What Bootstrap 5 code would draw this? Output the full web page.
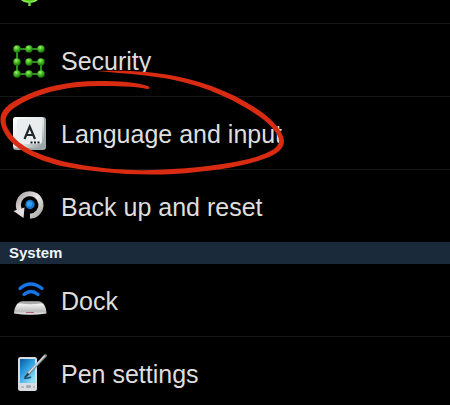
<!DOCTYPE html>
<html lang="en" data-bs-theme="dark">
<head>
<meta charset="utf-8">
<meta name="viewport" content="width=device-width, initial-scale=1">
<title>Settings</title>
<link href="https://cdn.jsdelivr.net/npm/bootstrap@5.3.0/dist/css/bootstrap.min.css" rel="stylesheet">
<style>
body{background:#000;font-family:"Liberation Sans",Arial,sans-serif;overflow:hidden}
.setting{min-height:73px;padding:2px 8px 0;gap:9px;border-bottom:1px solid #171717;color:#dedede;font-size:25px;line-height:30px}
.setting:hover{color:#fff}
.setting svg{width:44px;height:44px;flex:none}
.setting-cut{min-height:0;height:24px;padding-top:0}
.setting-last{min-height:72px;border-bottom:0}
.section-head{background:#1b2a3b;color:#eef5fa;font-size:15px;line-height:22px;padding:0 9px}
.pen-mark{left:0;top:0;z-index:2;pointer-events:none}
</style>
</head>
<body>
<main class="position-relative">
<nav class="d-flex flex-column" aria-label="Personal settings">
<a href="#location" aria-label="Location services" class="setting setting-cut d-flex align-items-end text-decoration-none overflow-hidden">
<svg viewBox="0 0 44 44"><circle cx="21.500" cy="11" r="13" fill="#52cf22"/><path d="M14 21q7 4 15 0" stroke="#91ed55" stroke-width="1.500" fill="none"/><path d="M21.500 22v5" stroke="#62d936" stroke-width="2.500"/></svg></a>
<a href="#security" class="setting d-flex align-items-center text-decoration-none">
<svg viewBox="0 0 44 44"><defs><radialGradient id="bead" cx=".4" cy=".3" r=".7"><stop stop-color="#a5f070"/><stop offset=".4" stop-color="#4cc727"/><stop offset="1" stop-color="#167007"/></radialGradient></defs>
<g transform="translate(0 4)"><path d="M33 6H9V31H33V19H21" fill="none" stroke="#2d8d1e" stroke-width="2"/>
<g fill="url(#bead)"><circle cx="9" cy="6" r="3.700"/><circle cx="21" cy="6" r="3.700"/><circle cx="33" cy="6" r="3.700"/><circle cx="9" cy="19" r="3.700"/><circle cx="21" cy="19" r="3.700"/><circle cx="33" cy="19" r="3.700"/><circle cx="9" cy="31" r="3.700"/><circle cx="21" cy="31" r="3.700"/><circle cx="33" cy="31" r="3.700"/></g></g></svg>
<span>Security</span></a>
<a href="#language" class="setting d-flex align-items-center text-decoration-none">
<svg viewBox="0 0 44 44"><defs><linearGradient id="key" x2="1" y2="1"><stop stop-color="#fff"/><stop offset=".6" stop-color="#dce2e3"/><stop offset="1" stop-color="#8d999c"/></linearGradient></defs>
<g transform="translate(0 -2)"><rect x="5" y="7" width="33" height="33" rx="3" fill="#9da8aa"/><rect x="5" y="7" width="31" height="31" rx="3" fill="url(#key)"/><rect x="9" y="9" width="25" height="25" rx="3" fill="#e9eded"/><path d="M16.500 29 21.700 16.500 27 29M18.500 25h6.500" fill="none" stroke="#20282b" stroke-width="2.200"/><path d="M22.500 32.500h2m1.500 0h2m1.500 0h2" stroke="#15191a" stroke-width="2"/></g></svg>
<span>Language and input</span></a>
<a href="#backup" class="setting setting-last d-flex align-items-center text-decoration-none">
<svg viewBox="0 0 44 44"><defs><linearGradient id="steel" x2="1" y2="1"><stop stop-color="#aaa5a5"/><stop offset=".5" stop-color="#ece8e8"/><stop offset="1" stop-color="#a9a4a4"/></linearGradient></defs>
<path d="M11.300 24.500A11.300 11.300 0 1 1 22 31.300" fill="none" stroke="url(#steel)" stroke-width="5"/><path d="M5.500 26 16.500 22.500 15.500 33Z" fill="#e4dfdf"/><circle cx="22" cy="19.500" r="4.700" fill="#1773c6"/><circle cx="21.500" cy="19" r="2.800" fill="#33a0f0"/></svg>
<span>Back up and reset</span></a>
</nav>
<h2 class="section-head fw-bold m-0">System</h2>
<nav class="d-flex flex-column" aria-label="System settings">
<a href="#dock" class="setting d-flex align-items-center text-decoration-none">
<svg viewBox="0 0 44 44"><defs><linearGradient id="dome" x2="0" y2="1"><stop stop-color="#777"/><stop offset=".25" stop-color="#efefef"/><stop offset=".75" stop-color="#bbb"/><stop offset="1" stop-color="#eee"/></linearGradient></defs>
<g transform="translate(0 -3)"><g fill="none" stroke="#1675e8" stroke-width="3.200" stroke-linecap="round"><path d="M12 12.500Q22.500 3.500 34 12.500"/><path d="M16 18.500Q23 12.500 30 18.500"/></g><path d="M6 37.500C6 31 10 25 15 25H30C35 25 38.500 31 38.500 37.500Q22 40 6 37.500Z" fill="url(#dome)"/><path d="M15 26.500Q22 25 30 26.500L31 27.500Q22 29 14 27.500Z" fill="#aaa"/><path d="M18 36.500h8" stroke="#b85f70" stroke-width="1"/></g></svg>
<span>Dock</span></a>
<a href="#pen" class="setting d-flex align-items-center text-decoration-none">
<svg viewBox="0 0 44 44"><defs><linearGradient id="screen" x2=".7" y2="1"><stop stop-color="#0a5a9a"/><stop offset=".45" stop-color="#2a9be0"/><stop offset="1" stop-color="#8fdcf5"/></linearGradient></defs>
<g transform="translate(0 -2)"><rect x="10" y="7" width="19" height="34" rx="2.500" fill="#d7dde0"/><rect x="12" y="9" width="15" height="24" fill="url(#screen)"/><path d="M13 37h3m9 0h2" stroke="#949da2" stroke-width="1"/><rect x="18" y="35" width="5" height="3" rx="1" fill="#a5adb1"/><path d="M16 28q3 1 7-1" stroke="#14507c" stroke-width="1.500" fill="none"/><path d="M37.500 5.500 20 24" stroke="#777f83" stroke-width="3" stroke-linecap="round"/><path d="M37 5.500 20 23.500" stroke="#d7dbdd" stroke-width="1.500"/><path d="M20.500 23.500 17 27.500" stroke="#23465c" stroke-width="2"/></g></svg>
<span>Pen settings</span></a>
</nav>
<svg class="pen-mark position-absolute" width="290" height="180" viewBox="0 0 290 180" aria-hidden="true"><path d="M97 71C125 70 151 71 175 76C211 83 241 97 263 113C277 124 284 134 284 142C283 151 274 156 258 161C235 168 205 172 174 174C130 176 93 172 61 166C30 158 12 147 4 132C-4 117 1 107 22 97C42 87 69 81 98 81C119 81 136 82 148 86Q152 89 147 89C134 86 117 86 98 86C71 86 48 91 28 100C7 110 2 118 8 129C17 145 34 154 66 162C99 169 135 172 173 169C206 167 234 163 256 157C271 152 279 147 279 141C279 134 271 125 260 117C237 101 208 87 174 80C150 75 128 74 97 71Z" fill="#d92b12"/></svg>
</main>
<script src="https://cdn.jsdelivr.net/npm/bootstrap@5.3.0/dist/js/bootstrap.bundle.min.js"></script>
</body>
</html>
